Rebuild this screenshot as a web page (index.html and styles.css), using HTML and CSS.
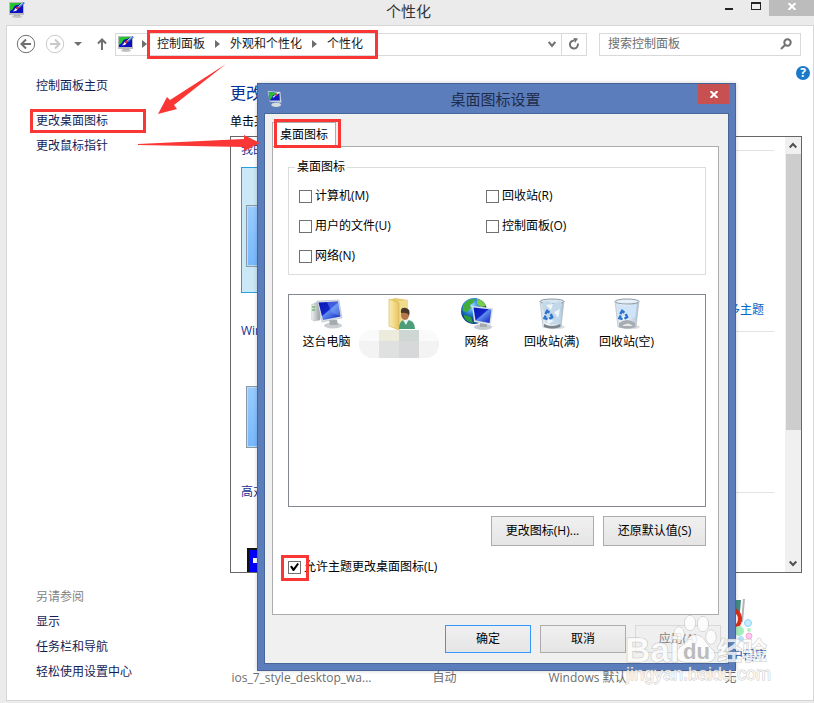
FILE: index.html
```
<!DOCTYPE html>
<html lang="zh-CN">
<head>
<meta charset="utf-8">
<title>个性化</title>
<link rel="stylesheet" href="styles.css">
</head>
<body>
<svg class="defs" aria-hidden="true">
  <defs>
    <linearGradient id="screen" x1="0" y1="0" x2="1" y2="1">
      <stop offset="0" stop-color="#0a14b4"/><stop offset=".45" stop-color="#1226c8"/><stop offset=".5" stop-color="#5f8cf0"/><stop offset="1" stop-color="#0a1ab8"/>
    </linearGradient>
    <linearGradient id="case" x1="0" x2="1"><stop offset="0" stop-color="#f4f4f4"/><stop offset="1" stop-color="#9a9fa5"/></linearGradient>
    <linearGradient id="folder" x1="0" x2="1"><stop offset="0" stop-color="#fbeeb0"/><stop offset="1" stop-color="#e6c565"/></linearGradient>
    <linearGradient id="bin" x1="0" x2="1"><stop offset="0" stop-color="#d3dde6"/><stop offset=".4" stop-color="#f6fbff"/><stop offset="1" stop-color="#a9bfd4"/></linearGradient>
    <radialGradient id="globe" cx=".4" cy=".3"><stop offset="0" stop-color="#9fe0ff"/><stop offset=".6" stop-color="#2b87d8"/><stop offset="1" stop-color="#0d4590"/></radialGradient>
    <symbol id="personalize" viewBox="0 0 16 16">
      <path d="M0 0H15V13H0Z" fill="#b9bcbc"/><path d="M1 1H14V11H1Z" fill="#0b0fc0"/>
      <path d="M1 1H13L9 3Q5 3 4 7L1 9Z" fill="#25c62c"/>
      <path d="M3.500 9Q6 9 6 6L8.500 7.500Q7 10 3.500 9Z" fill="#fff"/><path d="M6.500 6L9 4L10.500 5.500L8.500 7.500Z" fill="#e82a24"/>
      <path d="M9 4.500L14 0L16 1L10.500 6Z" fill="#3f73d4"/><path d="M9.500 4.500L14 .5" stroke="#fff" stroke-width=".8"/>
      <path d="M5 13H11V14H5Z" fill="#999"/><ellipse cx="8" cy="14.600" rx="5" ry="1.400" fill="#c2c2c2"/>
    </symbol>
    <symbol id="arrow-right" viewBox="0 0 5 8"><path d="M0 0L5 4L0 8Z" fill="#6e6e6e"/></symbol>
    <symbol id="recycle" viewBox="0 0 12 12">
      <g fill="none" stroke="#2c72cf" stroke-width="2.600"><path d="M2.500 5L4.500 1.500L7 3.500"/><path d="M8.500 5L10 8.500L7 10"/><path d="M5 10.500L1.500 9.500L3 6.500"/></g>
    </symbol>
  </defs>
</svg>

<div class="window">
  <header class="titlebar">
    <svg class="app-icon"><use href="#personalize"/></svg>
    <h1>个性化</h1>
    <div class="controls">
      <button class="min" aria-label="最小化"></button>
      <button class="max" aria-label="最大化"></button>
      <button class="close" aria-label="关闭"><svg viewBox="0 0 8 7"><path d="M.5 0L7.500 7M7.500 0L.5 7"/></svg></button>
    </div>
  </header>

  <div class="client">
    <nav class="toolbar">
      <button class="round" aria-label="后退"><svg viewBox="0 0 20 20"><circle cx="10" cy="10" r="8.700"/><path d="M15 10H6M10 5.500L5.500 10L10 14.500"/></svg></button>
      <button class="round faded" aria-label="前进"><svg viewBox="0 0 20 20"><circle cx="10" cy="10" r="8.700"/><path d="M5 10H14M10 5.500L14.500 10L10 14.500"/></svg></button>
      <button class="recent" aria-label="最近位置"><svg viewBox="0 0 8 4"><path d="M0 0H8L4 4Z"/></svg></button>
      <button class="up" aria-label="上移"><svg viewBox="0 0 10 12"><path d="M5 12V1.500M1 5.500L5 1.500L9 5.500"/></svg></button>
      <div class="address">
        <svg class="app-icon"><use href="#personalize"/></svg>
        <svg class="sep"><use href="#arrow-right"/></svg>
        <div class="crumbs">
          <a href="#">控制面板</a><svg class="sep"><use href="#arrow-right"/></svg>
          <a href="#">外观和个性化</a><svg class="sep"><use href="#arrow-right"/></svg>
          <a href="#">个性化</a>
        </div>
        <button class="history" aria-label="历史记录"><svg viewBox="0 0 8 7"><path d="M.7 1L4 5L7.300 1"/></svg></button>
        <button class="refresh" aria-label="刷新"><svg viewBox="0 0 12 12"><path d="M6 2.500A4 4 0 1 0 9.800 5.500"/><path d="M5.500 0L10 .5L7 5Z" class="solid"/></svg></button>
      </div>
      <div class="search">
        <input type="search" placeholder="搜索控制面板" aria-label="搜索控制面板">
        <svg viewBox="0 0 12 12"><circle cx="7.500" cy="4.500" r="3.200"/><path d="M5 7L1 11"/></svg>
      </div>
    </nav>

    <div class="body">
      <button class="help" aria-label="帮助">?</button>
      <aside class="sidebar">
        <a href="#" class="home">控制面板主页</a>
        <a href="#" class="marked">更改桌面图标</a>
        <a href="#">更改鼠标指针</a>
        <div class="see-also">
          <span>另请参阅</span>
          <a href="#">显示</a>
          <a href="#">任务栏和导航</a>
          <a href="#">轻松使用设置中心</a>
        </div>
      </aside>

      <main class="main">
        <h2>更改</h2>
        <p>单击某</p>
        <div class="themes">
          <div class="theme-list">
            <h3>我的</h3>
            <div class="tile"><div class="thumb"></div></div>
            <a class="more" href="#">多主题</a>
            <h3>Windows</h3>
            <div class="thumb lone"></div>
            <h3 class="contrast-title">高对</h3>
            <div class="contrast"><i></i></div>
          </div>
          <div class="scrollbar">
            <svg viewBox="0 0 8 7"><path d="M.7 5.500L4 2L7.300 5.500"/></svg>
            <div class="grip"></div>
            <svg class="down" viewBox="0 0 8 7"><path d="M.7 1.500L4 5L7.300 1.500"/></svg>
          </div>
        </div>
        <div class="settings">
          <span>ios_7_style_desktop_wa...</span>
          <span>自动</span>
          <span>Windows 默认</span>
          <div class="saver">
            <svg viewBox="0 0 52 50">
              <path d="M6 2H35L32 34H3Z" fill="#8db6ac"/><path d="M31 2H37L36 14H31Z" fill="#468c83"/><path d="M39 1H41L39 24H37Z" fill="#b3b3b3"/>
              <circle cx="26" cy="21" r="10" fill="#fff" stroke="#dc2f1c" stroke-width="4"/>
              <circle cx="35" cy="33" r="5" fill="#a4edbc"/><circle cx="44" cy="25" r="3.500" fill="#c5ecff" stroke="#91d3ff"/>
              <circle cx="45" cy="32" r="2" fill="#b3f4be"/><circle cx="45" cy="38" r="3" fill="#ffc6ee" stroke="#f6a7dd"/><circle cx="37" cy="41" r="3" fill="#b5e1ff"/>
            </svg>
            <a href="#">屏幕保护程序</a>
            <span>无</span>
          </div>
        </div>
      </main>
    </div>
  </div>

  <section class="dialog" role="dialog" aria-labelledby="dialog-title">
    <header class="dialog-title">
      <svg class="app-icon" viewBox="0 0 14 15"><path d="M1 0L13 1L14 11L3 10Z" fill="#c8d2dc"/><path d="M2 1L12 2L12.500 9L3 9Z" fill="#101dbf"/><path d="M2 1L12 2L6 4L4 8L3 8Z" fill="#27bf3a"/><path d="M6 6L12 1" stroke="#fff"/><path d="M8 4L10 3" stroke="#e33" stroke-width="1.500"/><ellipse cx="9" cy="13" rx="4.500" ry="2" fill="#d8dde0"/></svg>
      <h2 id="dialog-title">桌面图标设置</h2>
      <button class="dialog-close" aria-label="关闭"><svg viewBox="0 0 8 7"><path d="M.5 0L7.500 7M7.500 0L.5 7"/></svg></button>
    </header>
    <div class="dialog-body">
      <button class="tab" role="tab" aria-selected="true">桌面图标</button>
      <div class="page">
        <fieldset>
          <legend>桌面图标</legend>
          <label><input type="checkbox">计算机(M)</label>
          <label><input type="checkbox">回收站(R)</label>
          <label><input type="checkbox">用户的文件(U)</label>
          <label><input type="checkbox">控制面板(O)</label>
          <label><input type="checkbox">网络(N)</label>
        </fieldset>
        <ul class="icons">
          <li>
            <svg viewBox="0 0 32 32"><path d="M0 7L6 4L9 5V22L3 23L0 21Z" fill="url(#case)" stroke="#b5b8bb" stroke-width=".5"/><path d="M1 9H4M1 12H4" stroke="#3a3" /><ellipse cx="22" cy="27.500" rx="9" ry="3" fill="#c9cdd1"/><path d="M18 22H26L27 27H19Z" fill="#a6abb0"/><path d="M6 3L28 2L31 20L11 24Z" fill="#d9dfe6" stroke="#a9b2bb" stroke-width=".5"/><path d="M7.500 4.500L27 3.500L29.500 18.500L12 22Z" fill="url(#screen)"/><path d="M16 4L27 3.500L29 18L21 15Z" fill="#88b2fa" opacity=".4"/></svg>
            <span>这台电脑</span>
          </li>
          <li>
            <svg viewBox="0 0 32 32"><path d="M3 2L9 0L22 2V28L10 30L3 28Z" fill="#e7c96e"/><path d="M12 3L22 2V29L12 30Z" fill="#f1dc8c"/><path d="M3 1L13 5V32L3 28Z" fill="url(#folder)" stroke="#d6b455" stroke-width=".6"/><path d="M13 31Q13 22 19 22Q29 21 29 31Z" fill="#4d9d79"/><path d="M17 22L20 27L23 21Z" fill="#e8f1ec"/><ellipse cx="19" cy="17" rx="4" ry="5" fill="#b6784b"/><path d="M15 15Q14 9 20 10Q25 11 23 18Q22 14 15 15Z" fill="#48372b"/></svg>
            <div class="mosaic"><i></i><i></i><i></i><i></i><i></i><i></i><i></i><i></i></div>
          </li>
          <li>
            <svg viewBox="0 0 32 32"><circle cx="13" cy="13" r="13" fill="url(#globe)"/><path d="M4 5Q9 0 14 1L12 5L9 7L10 10L6 14L2 13Q1 8 4 5Z" fill="#43ac3b"/><path d="M16 1Q23 2 25 8L20 9L16 6Z" fill="#7bcb4c"/><path d="M3 17L10 19L12 25Q5 24 3 19Z" fill="#2f9c3a"/><ellipse cx="22" cy="29" rx="9" ry="3" fill="#c5cacf"/><path d="M19 24H26V29H19Z" fill="#a6abb0"/><path d="M11 8L32 10L30 27L13 24Z" fill="#dce2e8"/><path d="M12.500 9.500L30.500 11.500L28.500 25L14.500 22.500Z" fill="url(#screen)"/></svg>
            <span>网络</span>
          </li>
          <li>
            <svg viewBox="0 0 32 32"><ellipse cx="20" cy="29" rx="9" ry="2" fill="#ddd"/><path d="M4 3H28L25 29Q16 32 7 29Z" fill="url(#bin)" stroke="#aab5bf" stroke-width=".6"/><ellipse cx="16" cy="3.500" rx="12" ry="2.500" fill="#d8e5ef" stroke="#8e9aa5"/><path d="M6 5L12 3L17 6L23 3L26 6L23 13L25 18L22 25L15 27L9 24L11 17L7 12Z" fill="#c2d8e8"/><path d="M10 7L17 6L15 12ZM18 14L24 11L22 20ZM10 20L18 23L12 26Z" fill="#eef6fc"/><path d="M8 26Q16 30 24.500 26L24 29Q16 32 8 29Z" fill="#7d858c"/><use href="#recycle" x="7" y="11" width="11" height="12"/></svg>
            <span>回收站(满)</span>
          </li>
          <li>
            <svg viewBox="0 0 32 32"><ellipse cx="20" cy="29" rx="9" ry="2" fill="#ddd"/><path d="M4 3H28L25 29Q16 32 7 29Z" fill="url(#bin)" stroke="#aab5bf" stroke-width=".6"/><path d="M6 6Q16 9 26 6L24 20Q16 16 8 20Z" fill="#cfe4f8"/><ellipse cx="16" cy="3.500" rx="12" ry="2.500" fill="#e6f0f8" stroke="#8e9aa5"/><path d="M8 25Q16 19 24 25L24 29Q16 32 8 29Z" fill="#a7acb0"/><path d="M11 28Q17 23 22 28Z" fill="#e7e7e7"/><use href="#recycle" x="7" y="11" width="11" height="12"/></svg>
            <span>回收站(空)</span>
          </li>
        </ul>
        <div class="actions">
          <button>更改图标(H)...</button>
          <button>还原默认值(S)</button>
        </div>
        <label class="allow"><input type="checkbox" checked>允许主题更改桌面图标(L)</label>
      </div>
      <footer class="footer">
        <button class="default">确定</button>
        <button>取消</button>
        <button disabled>应用(A)</button>
      </footer>
    </div>
  </section>

  <svg class="arrows" viewBox="0 0 270 160" aria-hidden="true">
    <path d="M226 64L170 100L167 97L158 114L177 109L174 105Z"/>
    <path d="M138 144L244 139V135L260 143L244 151V147L138 145Z"/>
  </svg>

  <svg class="watermark" viewBox="0 0 150 80" aria-hidden="true">
    <g class="paw"><ellipse cx="54" cy="24" rx="5" ry="7"/><ellipse cx="65" cy="13" rx="5.500" ry="7.500"/><ellipse cx="78" cy="14" rx="5.500" ry="7.500"/><ellipse cx="86" cy="27" rx="5" ry="7"/><path d="M70 25C62 25 62 34 54 38C49 44 52 52 60 52H83C91 51 92 43 86 38C79 32 79 25 70 25Z"/></g>
    <text class="bai" x="0" y="52">Bai</text>
    <text class="du" x="58" y="49">du</text>
    <text class="exp" x="92" y="50">经验</text>
    <text class="url" x="1" y="70">jingyan.baidu.com</text>
  </svg>
</div>
</body>
</html>
```

FILE: styles.css
```
*, *::before, *::after { box-sizing: border-box; }
body {
  margin: 0;
  background: #ebebeb;
  color: #000;
  font: 12px/20px "Open Sans", "Noto Sans CJK SC", sans-serif;
}
h1, h2, h3, p, ul { margin: 0; padding: 0; font-weight: 400; }
a { color: #151c55; text-decoration: none; }
button { padding: 0; border: 0; background: none; color: inherit; font: inherit; }
svg { display: block; flex: none; }
.defs { position: absolute; width: 0; height: 0; }
.app-icon { width: 16px; height: 16px; }

.window { position: relative; display: flex; flex-direction: column; min-height: 100vh; padding: 0 0 2px 6px; }

/* Title bar */
.titlebar { position: relative; display: flex; align-items: flex-start; height: 25px; padding: 2px 22px 0 3px; }
.titlebar h1 { flex: 1; color: #333; font-size: 15px; line-height: 18px; text-align: center; }
.controls { position: absolute; top: 0; right: 0; display: flex; }
.controls button { display: flex; align-items: center; justify-content: center; width: 27px; height: 16px; }
.min::before { content: ""; width: 8px; height: 2px; margin-top: 1px; background: #222; }
.max::before { content: ""; width: 10px; height: 8px; margin-bottom: 4px; border: 1px solid #222; border-top-width: 2px; }
.controls .close { width: 45px; background: #bcbcbc; }
.close svg, .dialog-close svg { width: 8px; height: 7px; fill: none; stroke: #fff; stroke-width: 2; }
.controls .close svg { margin-bottom: 3px; }

/* Client area */
.client { flex: 1; display: flex; flex-direction: column; border: 1px solid #d6d6d6; background: #fff; }
.toolbar { display: flex; align-items: center; height: 36px; padding: 0 12px 0 9px; }
.toolbar svg { fill: none; stroke: #707070; stroke-width: 2; }
.toolbar .app-icon, .toolbar .sep { stroke: none; }
.round svg { width: 20px; height: 20px; }
.round { margin-right: 9px; }
.round circle { stroke-width: 1; }
.round.faded svg { stroke: #c9c9c9; }
.recent svg { width: 8px; height: 4px; fill: #6e6e6e; stroke: none; }
.up { margin: 0 8px 0 15px; }
.up svg { width: 10px; height: 12px; }
.address { flex: 1; display: flex; align-items: center; height: 23px; border: 1px solid #d9d9d9; }
.address .app-icon { margin: 0 8px 0 2px; }
.sep { width: 5px; height: 8px; }
.crumbs { display: flex; align-items: center; height: 29px; padding: 0 12px 0 7px; border: 3px solid #fb3735; }
.crumbs .sep { margin: 0 10px; }
.crumbs a { color: #1a1a1a; }
.history { margin-left: auto; padding: 0 5px; }
.history svg { width: 8px; height: 7px; }
.refresh { align-self: stretch; width: 25px; padding-left: 6px; border-left: 1px solid #d9d9d9; }
.refresh svg { width: 12px; height: 12px; }
.refresh .solid { fill: #707070; stroke: none; }
.search { flex: 0 1 202px; display: flex; align-items: center; height: 23px; margin-left: 12px; padding: 0 8px; border: 1px solid #d9d9d9; }
.search input { flex: 1; min-width: 0; padding: 0; border: 0; outline: 0; font: inherit; }
.search input::placeholder { color: #6d6d6d; }
.search svg { width: 12px; height: 12px; }

.body { position: relative; flex: 1; display: flex; padding: 14px 11px 12px 0; }
.help { position: absolute; top: 4px; right: 3px; width: 14px; height: 14px; border-radius: 50%; background: #1979ca; color: #fff; font-weight: 700; line-height: 14px; }

.sidebar { display: flex; flex-direction: column; align-items: flex-start; width: 223px; padding-left: 29px; }
.sidebar a, .see-also span { line-height: 25px; }
.sidebar .home { line-height: 20px; }
.sidebar .marked { width: 116px; margin: 13px 0 0 -6px; padding-left: 3px; border: 3px solid #fb3735; line-height: 18px; }
.see-also { display: flex; flex-direction: column; margin: auto 0 4px; }
.see-also span { color: #838383; }

.main { flex: 1; display: flex; flex-direction: column; min-width: 0; padding-top: 5px; }
.main h2 { color: #003399; font-size: 16px; line-height: 24px; }
.main p { margin: 7px 0 4px; }
.themes { flex: 1; display: flex; border: 1px solid #666; }
.theme-list { flex: 1; display: flex; flex-direction: column; padding: 3px 11px 0 10px; }
.theme-list h3 { display: flex; align-items: center; gap: 8px; color: #203090; font-size: 12px; }
.theme-list h3::after { content: ""; flex: 1; height: 1px; background: #e2e2e2; }
.tile { width: 150px; height: 126px; margin-top: 7px; padding: 37px 4px; border: 1px solid #26a0da; background: #cbe8f6; }
.thumb { height: 62px; border: 1px solid #8b9aa6; box-shadow: inset 0 0 0 1px #b9dcf6; background: linear-gradient(#99ccff, #77b8fc); }
.more { align-self: flex-end; margin: 7px 10px 1px 0; color: #0066cc; }
.lone { width: 140px; margin: 45px 0 34px 5px; }
.contrast { flex: 1; width: 140px; margin: 46px 0 0 6px; padding: 8px 4px; border: 2px solid #111; border-bottom: 0; background: #0000ff; }
.contrast i { display: block; width: 20px; height: 5px; background: #fff; }
.scrollbar { display: flex; flex-direction: column; align-items: center; width: 16px; padding: 5px 0; background: #f0f0f0; }
.scrollbar svg { width: 8px; height: 7px; fill: none; stroke: #505050; stroke-width: 2; }
.grip { width: 15px; height: 65%; margin-top: 5px; background: #cdcdcd; }
.down { margin-top: auto; }

.settings { display: grid; grid-template-columns: repeat(4, 1fr); align-items: end; justify-items: center; margin-top: 25px; color: #6d6d6d; }
.settings > span { white-space: nowrap; }
.saver { display: flex; flex-direction: column; align-items: center; }
.saver svg { width: 52px; height: 50px; }
.saver a { margin: -2px 0 2px; color: #0055bb; }

/* Dialog */
.dialog { position: absolute; top: 83px; left: 257px; right: 78px; padding: 0 6px 6px; border: 1px solid #466599; background: #5b7dbb; box-shadow: 0 0 4px #0003; }
.dialog-title { position: relative; display: flex; align-items: center; height: 29px; padding: 0 20px 0 2px; }
.dialog-title h2 { flex: 1; color: #1e2c4c; font-size: 15px; line-height: 18px; text-align: center; }
.dialog-close { position: absolute; top: 0; right: 0; display: flex; align-items: center; justify-content: center; width: 31px; height: 20px; background: #c75050; }
.dialog-body { padding: 8px 7px 10px; border: 1px solid #466599; background: #f0f0f0; }
.tab { position: relative; display: block; width: 64px; height: 24px; border: 1px solid #acacac; border-bottom: 0; background: #fff; line-height: 22px; }
.tab::after { content: ""; position: absolute; inset: -4px -6px -2px 1px; border: 3px solid #fb3735; }
.page { margin-right: 2px; padding: 10px 12px 37px 15px; border: 1px solid #acacac; background: #fff; }
fieldset { display: grid; grid-template-columns: 187px 1fr; row-gap: 10px; margin: 0; padding: 9px 10px 8px; border: 1px solid #dcdcdc; }
legend { padding: 0 2px; margin-left: -4px; }
label { display: flex; align-items: center; gap: 3px; }
label input { flex: none; display: grid; place-items: center; width: 13px; height: 13px; margin: 0; border: 1px solid #707070; background: #fff; appearance: none; }
label input:checked::before { content: ""; width: 9px; height: 8px; background: #000; clip-path: polygon(0 45%, 20% 35%, 40% 62%, 82% 0, 100% 12%, 45% 100%, 32% 100%); }
.icons { display: grid; grid-template-columns: repeat(5, 75px); height: 213px; margin-top: 19px; padding-top: 3px; border: 1px solid #828790; list-style: none; }
.icons li { display: flex; flex-direction: column; align-items: center; height: 60px; }
.icons svg { width: 32px; height: 32px; }
.icons span { margin-top: 2px; white-space: nowrap; }
.mosaic { display: grid; grid-template-columns: repeat(4, 20px); grid-template-rows: 11px 20px; margin-left: -5px; border-radius: 14px; overflow: hidden; background: #f3f3f3; }
.mosaic i { background: #f3f3f3; }
.mosaic i:nth-child(1), .mosaic i:nth-child(4) { background: #fafafa; }
.mosaic i:nth-child(2) { background: #edebdb; }
.mosaic i:nth-child(3) { background: #ced7d3; }
.mosaic i:nth-child(6) { background: #dfe0e0; }
.mosaic i:nth-child(7) { background: #d6d8d9; }
.actions, .footer { display: flex; justify-content: flex-end; gap: 9px; }
.actions { margin-top: 9px; }
.actions button, .footer button { width: 103px; height: 30px; border: 1px solid #acacac; background: linear-gradient(#f0f0f0, #e5e5e5); }
.allow { position: relative; width: max-content; margin-top: 11px; }
.allow::after { content: ""; position: absolute; top: -2px; left: -7px; width: 28px; height: 26px; border: 3px solid #fb3735; }
.footer { margin-top: 10px; }
.footer button { width: 86px; height: 28px; }
.footer .default { border-color: #3399ff; }
.footer button:disabled { border-color: #d9d9d9; background: #efefef; color: #838383; }

/* Annotations */
.arrows { position: absolute; top: 0; left: 0; width: 270px; height: 160px; fill: #fb3735; pointer-events: none; }
.watermark { position: absolute; top: 610px; right: 39px; width: 150px; height: 80px; overflow: visible; fill: #fffc; stroke: #9998; stroke-width: 1; paint-order: stroke; pointer-events: none; }
.watermark text { font-family: "Liberation Sans", "Noto Sans CJK SC", sans-serif; font-weight: 700; }
.bai { font-size: 35px; }
.du { font-size: 22px; fill: #bbb; stroke: none; }
.exp { font-size: 25px; }
.watermark .url { font-size: 18px; font-weight: 400; }
```
